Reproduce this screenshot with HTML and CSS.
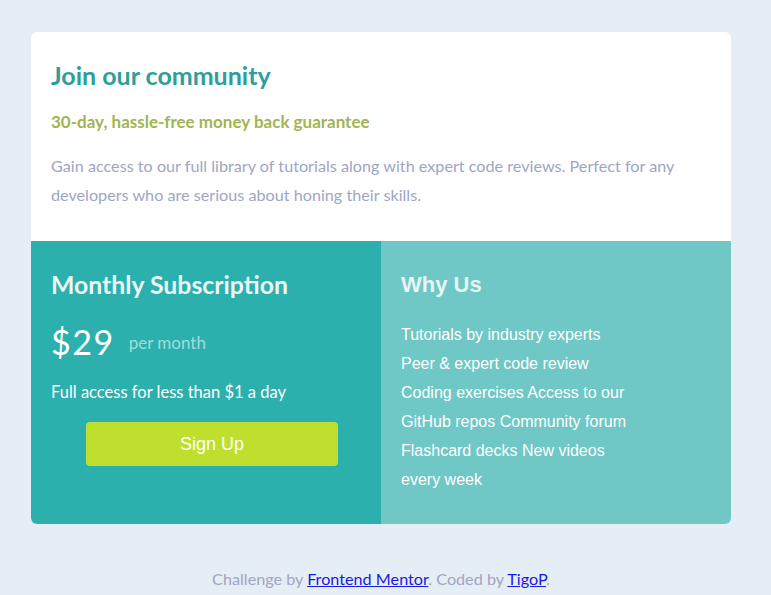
FILE: index.html
```html
<!DOCTYPE html>
<html lang="en">
<head>
<meta charset="utf-8">
<title>Single price grid</title>
<link rel="stylesheet" href="styles.css">
</head>
<body>
<div class="page">
  <main class="card">
    <section class="top">
      <h1 class="title">Join our community</h1>
      <h2 class="subtitle">30-day, hassle-free money back guarantee</h2>
      <p class="intro">Gain access to our full library of tutorials along with expert code reviews. Perfect for any developers who are serious about honing their skills.</p>
    </section>
    <div class="bottom">
      <section class="sub">
        <h2 class="col-title">Monthly Subscription</h2>
        <div class="price"><span class="amount">$29</span><span class="per">per month</span></div>
        <p class="access">Full access for less than $1 a day</p>
        <button class="signup">Sign Up</button>
      </section>
      <section class="why">
        <h2 class="col-title why-title">Why Us</h2>
        <p class="why-list">Tutorials by industry experts<br>Peer &amp; expert code review<br>Coding exercises Access to our GitHub repos Community forum Flashcard decks New videos every week</p>
      </section>
    </div>
  </main>
  <footer class="footer">Challenge by <a href="#">Frontend Mentor</a>. Coded by <a href="#">TigoP</a>.</footer>
</div>
</body>
</html>
```

FILE: styles.css
```css
html, body {
  margin: 0;
  padding: 0;
  background: #e5edf5;
}
body {
  font-family: "Lato", "Liberation Sans", sans-serif;
}
.page {
  width: 762px;
  padding-top: 32px;
}
.card {
  width: 700px;
  margin: 0 auto;
  border-radius: 6px;
  overflow: hidden;
  background: #fff;
}
.top {
  padding: 20px 20px 32px;
}
.title {
  margin: 9px 0 0;
  font-size: 25px;
  font-weight: 700;
  color: #2f9e9b;
  line-height: 28px;
}
.subtitle {
  margin: 23px 0 0;
  font-size: 17px;
  font-weight: 700;
  color: #a2b453;
  line-height: 20px;
}
.intro {
  margin: 19px 0 0;
  font-size: 16.2px;
  line-height: 29px;
  color: #a0a6c1;
}
.bottom {
  display: flex;
}
.sub, .why {
  width: 350px;
  box-sizing: border-box;
  padding: 30px 20px 24px;
  height: 283px;
}
.sub {
  background: #2bb0ad;
}
.why {
  background: #6fc7c6;
}
.col-title {
  margin: 0;
  font-size: 24.8px;
  font-weight: 700;
  line-height: 28px;
  color: #eaf6f5;
}
.why-title {
  font-family: "Liberation Sans", Arial, sans-serif;
  font-size: 22px;
  color: #e6f5f5;
}
.price {
  display: flex;
  align-items: center;
  gap: 14px;
  margin-top: 25px;
}
.amount {
  font-size: 34px;
  letter-spacing: 1.5px;
  color: #fff;
  line-height: 36px;
}
.per {
  font-size: 17px;
  color: #a3dcda;
}
.access {
  margin: 22px 0 0;
  font-size: 16.5px;
  color: #fff;
  line-height: 20px;
}
.signup {
  display: block;
  width: 252px;
  height: 44px;
  margin: 20px 0 0 35px;
  border: 0;
  border-radius: 4px;
  background: #bfdf2f;
  color: #fff;
  font-family: "Liberation Sans", Arial, sans-serif;
  font-size: 18px;
}
.why-list {
  margin: 21px 0 0;
  width: 235px;
  font-family: "Liberation Sans", Arial, sans-serif;
  font-size: 16px;
  line-height: 29px;
  color: #fff;
}
.footer {
  margin-top: 45px;
  text-align: center;
  font-size: 16.2px;
  color: #a0a6c1;
}
.footer a {
  color: #1a1ae6;
}
```
